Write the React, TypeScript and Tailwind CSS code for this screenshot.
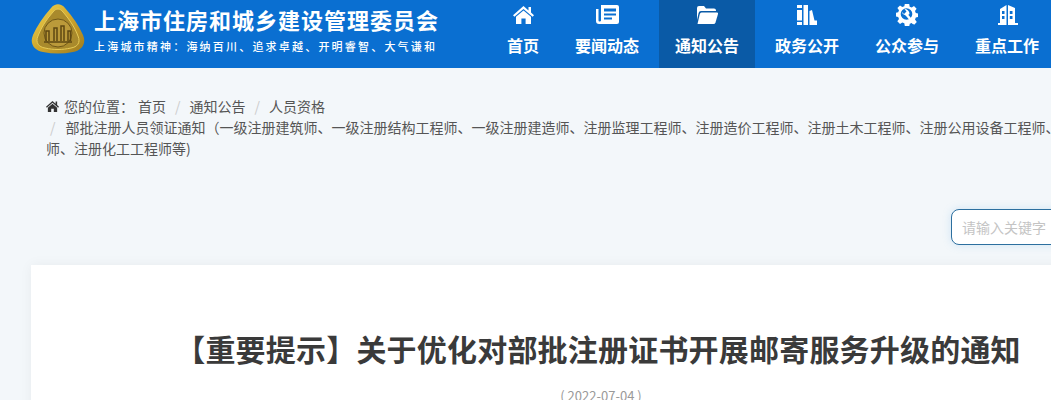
import { ReactNode } from "react";

const cjk = { fontFamily: '"Noto Sans CJK SC", "Liberation Sans", sans-serif' };

function Logo() {
  return (
    <svg width="54" height="50" viewBox="0 0 54 50">
      <defs>
        <linearGradient id="gold" x1="0" y1="0" x2="1" y2="1">
          <stop offset="0" stopColor="#f0d552" />
          <stop offset="0.5" stopColor="#cfa62e" />
          <stop offset="1" stopColor="#9c7a1f" />
        </linearGradient>
      </defs>
      <path d="M20 4 C24 -1 30 -1 34 4 C42 13 48 22 52 31 C56 40 50 47 42 48 C32 50 22 50 12 48 C4 47 -2 40 2 31 C6 22 12 13 20 4 Z" fill="url(#gold)" />
      <path d="M22 8 C25 4 29 4 32 8 C39 16 44 24 47 32 C50 39 46 43 40 44 C31 46 23 46 14 44 C8 43 4 39 7 32 C10 24 15 16 22 8 Z" fill="#a98a2c" stroke="#e6cb58" strokeWidth="1" />
      <circle cx="27" cy="29" r="14" fill="#bb9a3a" stroke="#6f5718" strokeWidth="1" />
      <path d="M15 37 V27 h3 v10 M23 37 V24 h3 v13 M30 37 V22 h3 v15 M37 37 V27 h2.5 v10 M13 38 H41" stroke="#5f4812" strokeWidth="1.5" fill="none" />
    </svg>
  );
}

function HomeIcon({ size = 21, className = "" }: { size?: number; className?: string }) {
  return (
    <svg width={size} height={(size * 18) / 21} viewBox="0 0 21 18" fill="currentColor" className={className}>
      <path d="M10.5 0 L15.5 4.4 V1 H18 V6.6 L21 9.3 L19.6 10.8 L10.5 2.9 L1.4 10.8 L0 9.3 Z" />
      <path d="M10.5 4.4 L18 10.8 V18 H12.6 V12.5 H8.4 V18 H3 V10.8 Z" />
    </svg>
  );
}

function NewsIcon() {
  return (
    <svg width="23" height="19" viewBox="0 0 23 19">
      <path fill="white" fillRule="evenodd" d="M5 0 H21 Q23 0 23 2 V17 Q23 19 21 19 H3 Q0 19 0 16 V4 H2.5 V15.5 Q2.5 16.5 3.5 16.5 Q5 16.5 5 15.5 Z M8 3.5 V6.5 H20 V3.5 Z M8 8.5 V10.5 H20 V8.5 Z M8 12.5 V14.5 H16 V12.5 Z" />
    </svg>
  );
}

function FolderIcon() {
  return (
    <svg width="22" height="18" viewBox="0 0 22 18" fill="white">
      <path d="M1 2 Q1 0 3 0 H8 L10 2.5 H18 Q20 2.5 20 4.5 V5 H5 Q3 5 2.6 7 L1 14 Z" />
      <path d="M5.5 6.5 H21 Q22.3 6.5 22 8 L19.5 16.5 Q19 18 17.5 18 H1.5 L3.8 8 Q4.2 6.5 5.5 6.5 Z" />
    </svg>
  );
}

function BooksIcon() {
  return (
    <svg width="20" height="20" viewBox="0 0 20 20" fill="white">
      <rect x="0" y="0" width="5" height="3" />
      <rect x="0" y="5" width="5" height="10.5" />
      <rect x="0" y="17" width="5" height="3" />
      <rect x="6.5" y="0" width="4.5" height="20" />
      <path d="M12.5 6 L15 5 L17.5 15.5 L20 15.5 V20 H12.5 Z" />
    </svg>
  );
}

function GearWrenchIcon() {
  return (
    <svg width="22" height="22" viewBox="0 0 22 22">
      <path
        fill="white"
        d="M8.8 0h4.4l.5 2.8 2 .8L18 2l2.6 2.7-1.6 2.2.8 2 2.2.5v3.6l-2.2.6-.8 1.8 1.8 2.5-2.6 2.8-2.4-1.7-2 .8-.5 2.2H8.8l-.5-2.7-2-.8L4 20 1.3 17.3 3 15l-.8-2L0 12.4V8.8l2.2-.5.8-2L1.4 4 4 1.4 6.3 3l2-.8z"
      />
      <circle cx="10.5" cy="10" r="5.8" fill="#0a6fd1" />
      <path d="M10 10 L18 19.5" stroke="white" strokeWidth="2.6" />
      <path d="M5.5 7.5 L8 10 L10.5 7.5 L8.5 5 A5 5 0 0 1 13.5 10 A5 5 0 0 1 5.5 7.5 Z" fill="white" />
    </svg>
  );
}

function BuildingIcon() {
  return (
    <svg width="21" height="20" viewBox="0 0 21 20">
      <path
        fill="white"
        fillRule="evenodd"
        d="M3 4 L9.5 0 V20 H1 V18 H3 Z M11 0 L18 3 V18 H21 V20 H11 Z M5 6 V9 H7.5 V6 Z M5 11 V14 H7.5 V11 Z M12.8 6 V9 H15.5 V6 Z M12.8 11 V14 H15.5 V11 Z"
      />
    </svg>
  );
}

const navItems: { label: string; icon: ReactNode; active?: boolean }[] = [
  { label: "首页", icon: <HomeIcon /> },
  { label: "要闻动态", icon: <NewsIcon /> },
  { label: "通知公告", icon: <FolderIcon />, active: true },
  { label: "政务公开", icon: <BooksIcon /> },
  { label: "公众参与", icon: <GearWrenchIcon /> },
  { label: "重点工作", icon: <BuildingIcon /> },
];

function Sep() {
  return <span className="text-[#ccc] px-[9px]">/</span>;
}

export default function App() {
  return (
    <div className="w-[1051px] h-[400px] overflow-hidden bg-[#f3f7fa]" style={cjk}>
      <div className="w-[1196px]">
        <header className="h-[68px] bg-[#0a6fd1] flex text-white">
          <div className="w-[491px] flex items-center pl-[31px] pb-[10px] shrink-0">
            <Logo />
            <div className="ml-[9px] whitespace-nowrap">
              <div className="text-[22px] leading-[30px] font-bold tracking-[1px]">上海市住房和城乡建设管理委员会</div>
              <div className="text-[11px] leading-[16px] mt-[4px] font-medium tracking-[2.2px]">{"上海城市精神\uFF1A海纳百川、追求卓越、开明睿智、大气谦和"}</div>
            </div>
          </div>
          <nav className="flex gap-[4px]">
            {navItems.map((item) => (
              <div key={item.label} className={`px-[16px] h-[68px] flex flex-col items-center ${item.active ? "bg-[#0a5aa6]" : ""}`}>
                <div className="h-[33px] pb-[4px] flex items-center justify-center">{item.icon}</div>
                <div className="text-[16px] leading-[24px] font-bold whitespace-nowrap">{item.label}</div>
              </div>
            ))}
          </nav>
        </header>

        <div className="pt-[28px] pl-[46px] text-[14px] leading-[21px] text-[#555] whitespace-nowrap">
          <div className="flex items-center">
            <HomeIcon size={13} className="text-[#333] mr-[5px]" />
            <span>{"您的位置\uFF1A"}</span>
            <span className="ml-[4px]">首页</span>
            <Sep />
            <span>通知公告</span>
            <Sep />
            <span>人员资格</span>
          </div>
          <div className="pl-[4px]">
            <span className="text-[#ccc] pr-[10px]">/</span>
            <span>{"部批注册人员领证通知\uFF08一级注册建筑师、一级注册结构工程师、一级注册建造师、注册监理工程师、注册造价工程师、注册土木工程师、注册公用设备工程师、"}</span>
          </div>
          <div>师、注册化工工程师等)</div>
        </div>

        <div className="w-[1134px] ml-[31px]">
          <div className="flex justify-end mt-[50px]">
            <input
              placeholder="请输入关键字"
              className="w-[214px] h-[36px] bg-white border border-[#2c6f9f] rounded-[8px] px-[10px] text-[14px] outline-none placeholder:text-[#c4c4c4] shadow-[0_0_8px_rgba(102,175,233,0.25)]"
            />
          </div>
          <div className="mt-[20px] bg-white h-[200px] pt-[63px] text-center shadow-[0_0_12px_rgba(0,0,0,0.05)]">
            <h1 className="text-[30px] leading-[40px] font-bold text-[#3a3a3a] tracking-[0.2px]">【重要提示】关于优化对部批注册证书开展邮寄服务升级的通知</h1>
            <p className="text-[13px] leading-[18px] mt-[19px] pl-[6px] text-[#999]">( 2022-07-04 )</p>
          </div>
        </div>
      </div>
    </div>
  );
}
